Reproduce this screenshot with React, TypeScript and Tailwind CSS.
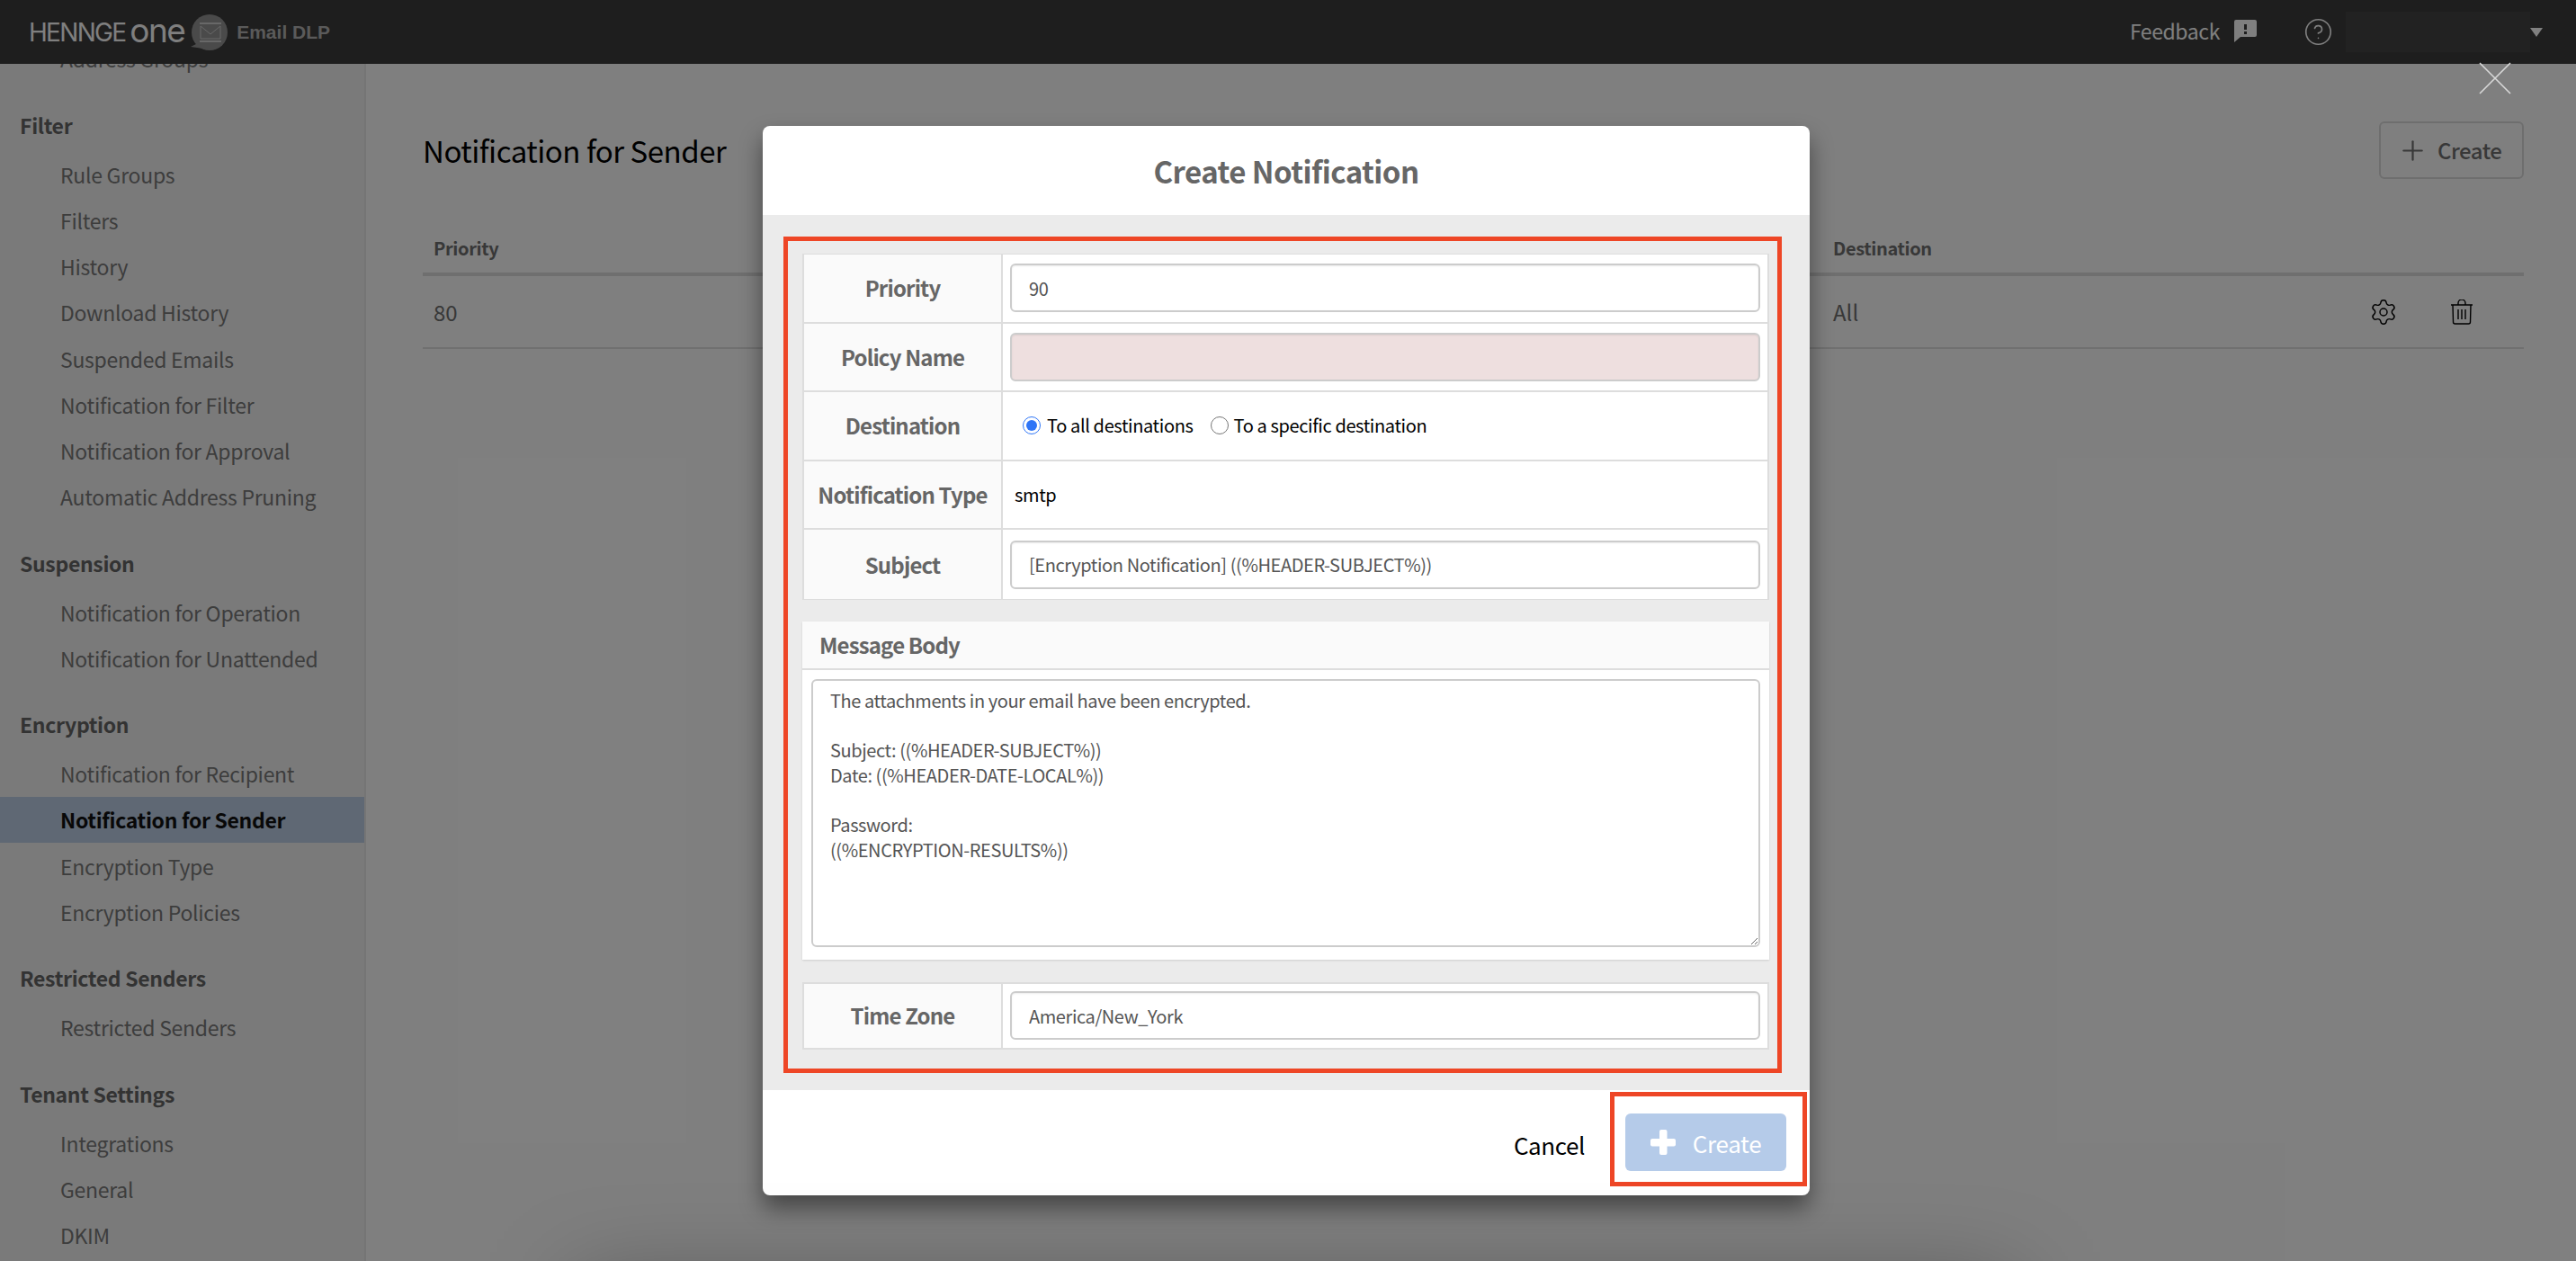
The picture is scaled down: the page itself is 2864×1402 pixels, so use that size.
import { Settings, CircleHelp, Plus } from "lucide-react";

const sans = "font-['Noto_Sans_CJK_JP','Source_Sans_Pro',sans-serif]";

const sections = [
  { title: "Filter", items: ["Rule Groups", "Filters", "History", "Download History", "Suspended Emails", "Notification for Filter", "Notification for Approval", "Automatic Address Pruning"] },
  { title: "Suspension", items: ["Notification for Operation", "Notification for Unattended"] },
  { title: "Encryption", items: ["Notification for Recipient", "Notification for Sender", "Encryption Type", "Encryption Policies"] },
  { title: "Restricted Senders", items: ["Restricted Senders"] },
  { title: "Tenant Settings", items: ["Integrations", "General", "DKIM"] },
];

const Logo = () => (
  <div className="flex items-center h-full pl-[32px]">
    <span className="font-['Inter',sans-serif] font-normal text-white text-[28px] tracking-[-1.7px] leading-none">HENNGE</span>
    <span className="font-['Inter',sans-serif] font-normal text-white text-[37px] tracking-[-1.6px] leading-none ml-[5px] -mt-[5px]">one</span>
    <svg width="46" height="44" viewBox="0 0 46 44" className="ml-[3px]">
      <circle cx="25" cy="22" r="20" fill="#959595" />
      <path d="M4 38 L16 32 L18 40 Z" fill="#959595" />
      <path d="M14 12 H38 M14 32 H38" stroke="#d0d0d0" strokeWidth="2" />
      <path d="M15 15 V29 H37 V15 L26 24 Z" stroke="#d0d0d0" strokeWidth="1" fill="none" />
    </svg>
    <span className="font-['Liberation_Sans',sans-serif] font-bold text-[#b4b4b4] text-[21px] ml-[9px]">Email DLP</span>
  </div>
);

const TopBar = () => (
  <header className={`h-[71px] shrink-0 bg-[#3c3c3c] flex items-center justify-between relative z-10 ${sans}`}>
    <Logo />
    <div className="flex items-center h-full">
      <span className="text-white text-[23px] tracking-[-0.4px] leading-none -mt-[3px]">Feedback</span>
      <svg width="25" height="25" viewBox="0 0 25 25" className="ml-[16px] -mt-[2px]">
        <path fillRule="evenodd" fill="#ffffff" d="M2 0H23a2 2 0 0 1 2 2V17a2 2 0 0 1-2 2H7L0 25V2a2 2 0 0 1 2-2Z M11 5V11H14V5Z M11 13V16H14V13Z" />
      </svg>
      <CircleHelp size={33} strokeWidth={1.2} className="text-white ml-[52px]" />
      <div className="w-[205px] h-[45px] bg-[#444444] ml-[14px]" />
      <div className="w-0 h-0 border-x-[7.5px] border-x-transparent border-t-[10px] border-t-white mr-[37px]" />
    </div>
  </header>
);

const Sidebar = () => (
  <aside className={`w-[407px] shrink-0 bg-[#f5f5f5] border-r-2 border-[#ebebeb] overflow-hidden ${sans}`}>
    <div className="-mt-[31px]">
      <div className="h-[51.2px] pl-[67px] flex items-center text-[23px] tracking-[-0.28px] text-[#7a7a7a]">Address Groups</div>
      {sections.map((s) => (
        <div key={s.title} className="mt-[27.8px]">
          <div className="h-[40px] pl-[22px] mb-[9.5px] flex items-center text-[23px] tracking-[-0.33px] font-bold text-[#666666]">{s.title}</div>
          {s.items.map((item) =>
            item === "Notification for Sender" ? (
              <div key={item} className="h-[51.2px] pl-[67px] flex items-center text-[23px] tracking-[-0.33px] font-bold text-[#111111] bg-[#bed0e8]">{item}</div>
            ) : (
              <div key={item} className="h-[51.2px] pl-[67px] flex items-center text-[23px] tracking-[-0.28px] text-[#7a7a7a]">{item}</div>
            )
          )}
        </div>
      ))}
    </div>
  </aside>
);

const Trash = () => (
  <svg width="26" height="28" viewBox="0 0 26 28" fill="none" stroke="#000" strokeWidth="1.4">
    <path d="M1 6H25 M9 6V4a4 4 0 0 1 8 0V6 M3 6 L3.5 25a2 2 0 0 0 2 2H20.5a2 2 0 0 0 2-2L23 6 M9 11V22 M13 11V22 M17 11V22" />
  </svg>
);

const Main = () => (
  <main className={`flex-1 bg-white pl-[63px] pr-[58px] pt-[64px] ${sans}`}>
    <div className="flex items-center justify-between h-[64px]">
      <h1 className="text-[33px] tracking-[-0.48px] text-black leading-none">Notification for Sender</h1>
      <button className="w-[161px] h-[64px] border-2 border-[#dcdcdc] rounded-[6px] flex items-center pl-[18px] gap-[10px] text-[#707070] text-[24px] tracking-[-0.5px] font-medium">
        <Plus size={35} strokeWidth={1.5} />
        Create
      </button>
    </div>
    <div className="mt-[50px] h-[58px] border-b-4 border-[#dedede] flex items-center px-[12px] text-[20px] tracking-[-0.38px] font-bold text-[#707070]">
      <div className="w-[1556px]">Priority</div>
      <div>Destination</div>
    </div>
    <div className="h-[81px] border-b-2 border-[#e0e0e0] flex items-center px-[12px] text-[24px] text-[#707070]">
      <div className="w-[1556px]">80</div>
      <div>All</div>
      <div className="ml-auto flex items-center gap-[58px] pr-[44px]">
        <Settings size={32} strokeWidth={1.1} className="text-black" />
        <Trash />
      </div>
    </div>
  </main>
);

const Row = ({ label, small, children }: { label: string; small?: boolean; children: React.ReactNode }) => (
  <div className={`flex border-b-2 border-[#dddddd] last:border-b-0 ${small ? "h-[71px]" : "h-[76.6px]"}`}>
    <div className="w-[221px] shrink-0 bg-[#fafafa] border-r-2 border-[#dddddd] flex items-center justify-center text-[24px] tracking-[-0.85px] font-bold text-[#666666]">{label}</div>
    <div className="flex-1 flex items-center px-[8px]">{children}</div>
  </div>
);

const inputClass = "w-full h-[54px] rounded-[6px] border-2 border-[#cccccc] px-[19px] text-[20px] tracking-[-0.41px] text-[#555555] outline-none shadow-[inset_0_1px_2px_rgba(0,0,0,0.08)]";

const messageBody = `The attachments in your email have been encrypted.

Subject: ((%HEADER-SUBJECT%))
Date: ((%HEADER-DATE-LOCAL%))

Password:
((%ENCRYPTION-RESULTS%))`;

const Modal = () => (
  <div className={`w-[1164px] h-[1189px] bg-white rounded-[8px] flex flex-col overflow-hidden shadow-[0_14px_26px_rgba(0,0,0,0.45)] ${sans}`}>
    <div className="h-[99px] shrink-0 pt-[2px] flex items-center justify-center text-[33px] tracking-[-0.55px] font-bold text-[#666666]">Create Notification</div>
    <div className="h-[973px] shrink-0 bg-[#ebebeb] pl-[23px] pr-[31px] pt-[24px]">
      <div className="h-[930px] border-[5px] border-[#ee4626] pl-[16px] pr-[9px] pt-[14px]">
        <div className="bg-white border-x-2 border-y border-[#dddddd]">
          <Row label="Priority"><input readOnly value="90" className={inputClass} /></Row>
          <Row label="Policy Name"><input readOnly value="" className={`${inputClass} bg-[#eedfdf]`} /></Row>
          <Row label="Destination">
            <label className="flex items-center text-[20px] tracking-[-0.37px] text-black ml-[14px]">
              <input type="radio" name="dest" defaultChecked className="w-[20px] h-[20px] accent-[#2f75f6] mr-[7px]" />
              To all destinations
            </label>
            <label className="flex items-center text-[20px] tracking-[-0.37px] text-black ml-[19px]">
              <input type="radio" name="dest" className="w-[20px] h-[20px] mr-[6px]" />
              To a specific destination
            </label>
          </Row>
          <Row label="Notification Type"><span className="text-[20px] tracking-[-0.37px] text-black ml-[5px]">smtp</span></Row>
          <Row label="Subject"><input readOnly value="[Encryption Notification] ((%HEADER-SUBJECT%))" className={inputClass} /></Row>
        </div>
        <div className="mt-[24px] h-[376px] bg-white flex flex-col shadow-[0_1px_2px_rgba(0,0,0,0.12)]">
          <div className="h-[54px] shrink-0 bg-[#fafafa] border-b-2 border-[#dddddd] flex items-center pl-[19px] text-[24px] tracking-[-0.85px] font-bold text-[#666666]">Message Body</div>
          <div className="px-[10px] pt-[10px]">
            <textarea
              readOnly
              value={messageBody}
              className="w-full h-[298px] block rounded-[6px] border-2 border-[#cccccc] px-[19px] py-[8px] text-[20px] tracking-[-0.41px] leading-[27.6px] text-[#555555] outline-none"
            />
          </div>
        </div>
        <div className="mt-[25px] bg-white border-2 border-[#dddddd]">
          <Row label="Time Zone" small><input readOnly value="America/New_York" className={inputClass} /></Row>
        </div>
      </div>
    </div>
    <div className="flex-1 flex justify-end items-start pt-[2px] pr-[3px]">
      <button className="text-[26px] tracking-[-0.4px] text-black leading-none mr-[28px] mt-[46px]">Cancel</button>
      <div className="border-[5px] border-[#ee4626] pl-[12px] pr-[18px] pt-[19px] pb-[12px]">
        <button className="w-[179px] h-[64px] rounded-[6px] bg-[#b5cbe9] text-white text-[26px] tracking-[-0.3px] flex items-center justify-center gap-[19px]">
          <svg width="28" height="28" viewBox="0 0 28 28" fill="#ffffff">
            <rect x="10" y="0" width="8.5" height="28" rx="2" />
            <rect x="0" y="10" width="28" height="8.5" rx="2" />
          </svg>
          Create
        </button>
      </div>
    </div>
  </div>
);

export default function App() {
  return (
    <div className="relative h-screen w-screen overflow-hidden flex flex-col">
      <TopBar />
      <div className="flex-1 flex min-h-0">
        <Sidebar />
        <Main />
      </div>
      <div className="absolute inset-0 z-20 bg-black/50 flex justify-center pt-[140px] pr-[4px]">
        <Modal />
      </div>
      {/* soft shadow coming up from under the page edge */}
      <div className="absolute z-20 left-[640px] w-[1600px] top-[1425px] h-[160px] bg-black/30 blur-[50px]" />
      <svg width="36" height="36" viewBox="0 0 36 36" className="absolute z-30 left-[2756px] top-[69px]" stroke="#d8d8d8" strokeWidth="1.6">
        <path d="M1 1 L35 35 M35 1 L1 35" />
      </svg>
    </div>
  );
}
